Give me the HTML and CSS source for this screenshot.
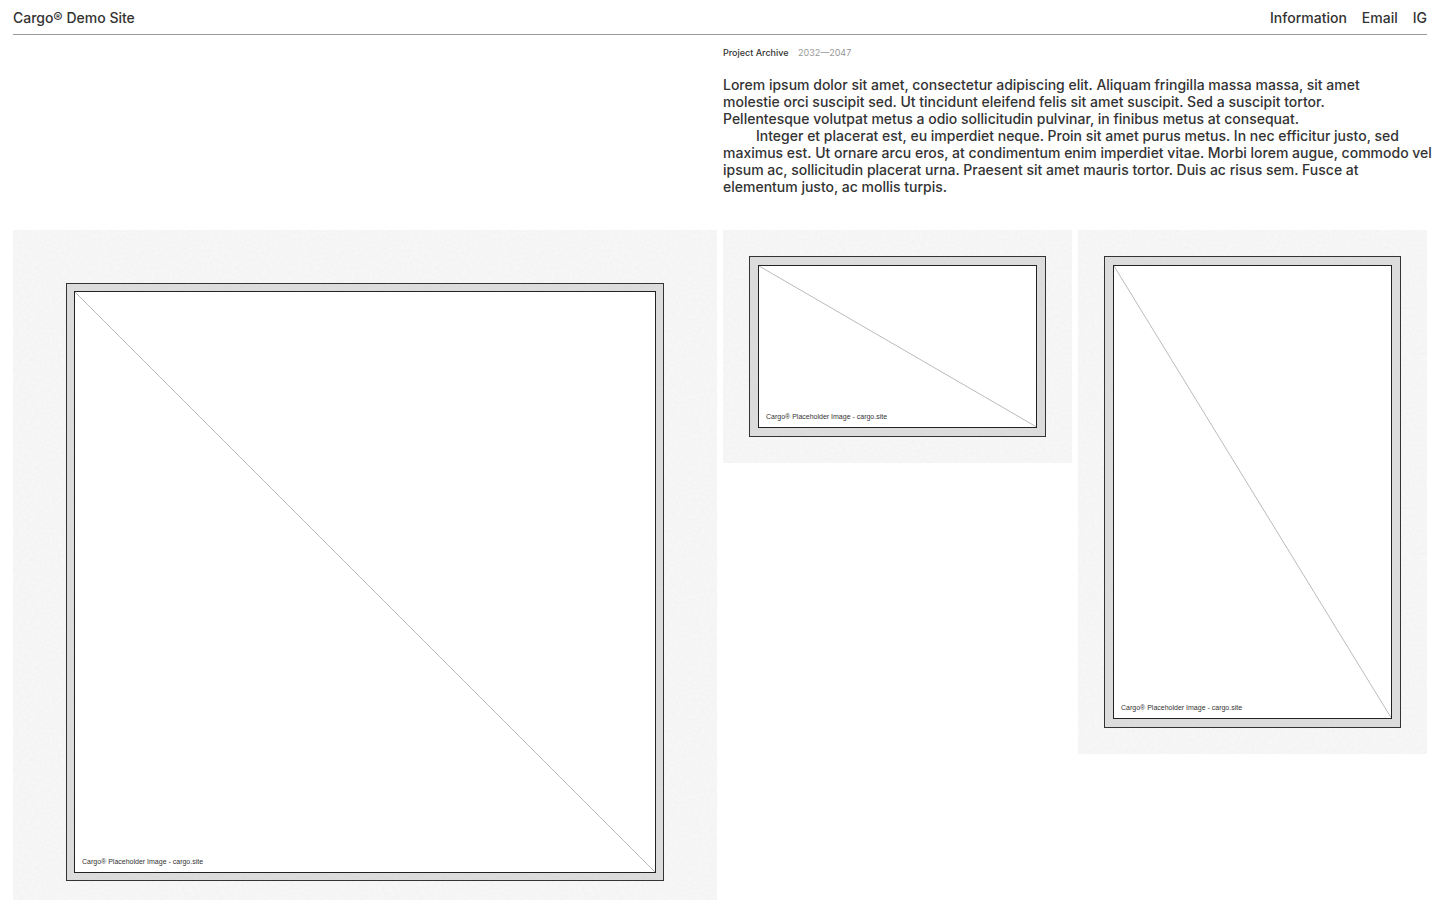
FILE: index.html
```html
<!DOCTYPE html>
<html lang="en">
<head>
<meta charset="utf-8">
<title>Cargo® Demo Site</title>
<link rel="stylesheet" href="styles.css">
</head>
<body>
<header class="site-header">
  <a class="site-title" href="#">Cargo® Demo Site</a>
  <nav class="site-nav">
    <a href="#">Information</a>
    <a href="#">Email</a>
    <a href="#">IG</a>
  </nav>
</header>
<main>
  <section class="intro">
    <div class="intro-body">
      <h1 class="eyebrow">Project Archive <span class="years">2032—2047</span></h1>
      <p>Lorem ipsum dolor sit amet, consectetur adipiscing elit. Aliquam fringilla massa massa, sit amet<br>molestie orci suscipit sed. Ut tincidunt eleifend felis sit amet suscipit. Sed a suscipit tortor.<br>Pellentesque volutpat metus a odio sollicitudin pulvinar, in finibus metus at consequat.</p>
      <p class="indented">Integer et placerat est, eu imperdiet neque. Proin sit amet purus metus. In nec efficitur justo, sed<br>maximus est. Ut ornare arcu eros, at condimentum enim imperdiet vitae. Morbi lorem augue, commodo vel<br>ipsum ac, sollicitudin placerat urna. Praesent sit amet mauris tortor. Duis ac risus sem. Fusce at<br>elementum justo, ac mollis turpis.</p>
    </div>
  </section>
  <section class="gallery">
    <figure class="tile tile-large">
      <div class="frame"><div class="canvas">
        <svg class="diagonal" viewBox="0 0 100 100" preserveAspectRatio="none" aria-hidden="true"><path d="M0 0L100 100"/></svg>
        <figcaption>Cargo® Placeholder Image - cargo.site</figcaption>
      </div></div>
    </figure>
    <figure class="tile tile-wide">
      <div class="frame"><div class="canvas">
        <svg class="diagonal" viewBox="0 0 100 100" preserveAspectRatio="none" aria-hidden="true"><path d="M0 0L100 100"/></svg>
        <figcaption>Cargo® Placeholder Image - cargo.site</figcaption>
      </div></div>
    </figure>
    <figure class="tile tile-tall">
      <div class="frame"><div class="canvas">
        <svg class="diagonal" viewBox="0 0 100 100" preserveAspectRatio="none" aria-hidden="true"><path d="M0 0L100 100"/></svg>
        <figcaption>Cargo® Placeholder Image - cargo.site</figcaption>
      </div></div>
    </figure>
  </section>
</main>
</body>
</html>
```
FILE: styles.css
```css
* { box-sizing: border-box; }

:root {
  --ink: #333;
  --grain: url("data:image/svg+xml,%3Csvg xmlns='http://www.w3.org/2000/svg' width='200' height='200'%3E%3Cfilter id='n' x='0' y='0' width='100%25' height='100%25'%3E%3CfeTurbulence type='fractalNoise' baseFrequency='.35' numOctaves='3' stitchTiles='stitch'/%3E%3CfeColorMatrix values='0 0 0 0 0 0 0 0 0 0 0 0 0 0 0 .03 0 0 0 0'/%3E%3C/filter%3E%3Crect width='200' height='200' filter='url(%23n)'/%3E%3C/svg%3E");
}

body {
  margin: 0;
  padding: 0 13px;
  background: #fff;
  color: var(--ink);
  font: 500 14px/17px Inter, "Liberation Sans", sans-serif;
}

a { color: inherit; text-decoration: none; }

.site-header {
  display: flex;
  justify-content: space-between;
  padding: 9px 0 8px;
  border-bottom: 1px solid #999;
}

.site-nav { display: flex; gap: 15px; }

.intro {
  display: grid;
  grid-template-columns: repeat(2, minmax(0, 1fr));
  gap: 6px;
  padding: 9px 0 35px;
}

.intro-body { grid-column: 2; white-space: nowrap; }

.intro p { margin: 0; }
.intro .indented { text-indent: 33px; }

.eyebrow {
  margin: 0 0 15px;
  font-size: 9px;
  font-weight: 500;
  line-height: 17px;
}

.years { margin-left: 7px; color: #999; font-weight: 400; }

.gallery {
  display: grid;
  grid-template-columns: repeat(4, minmax(0, 1fr));
  gap: 6px;
  align-items: start;
}

.tile {
  display: flex;
  margin: 0;
  padding: 26px;
  background: var(--grain) #f9f9f9;
}

.tile-large { grid-column: span 2; aspect-ratio: 1; padding: 53px; }
.tile-wide { aspect-ratio: 3 / 2; }
.tile-tall { aspect-ratio: 2 / 3; }

.frame {
  display: flex;
  flex: 1;
  padding: 8px;
  border: 1px solid var(--ink);
  background: var(--grain) #dfdfdf;
}

.tile-large .frame { padding: 7px; }

.canvas {
  position: relative;
  display: flex;
  flex: 1;
  align-items: flex-end;
  padding: 6px 7px;
  border: 1px solid #222;
  background: #fff;
}

.diagonal {
  position: absolute;
  inset: 0;
  width: 100%;
  height: 100%;
}

.diagonal path {
  stroke: #bbb;
  stroke-width: 1;
  vector-effect: non-scaling-stroke;
}

figcaption {
  font-family: "Liberation Sans", sans-serif;
  font-size: 7px;
  font-weight: 400;
  line-height: 9px;
}
```
